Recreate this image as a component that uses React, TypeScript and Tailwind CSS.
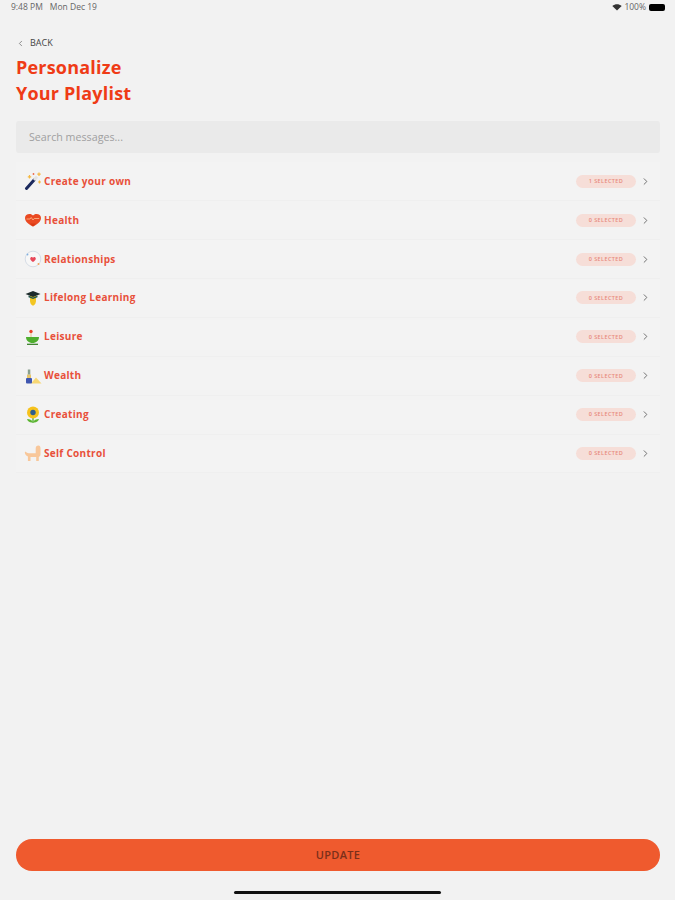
import { ChevronLeft, ChevronRight } from 'lucide-react';
import type { ReactNode } from 'react';

const Wand = () => (
  <svg viewBox="0 0 18 18" className="w-[18px] h-[18px]">
    <path d="M2.500 16.500 L10.500 7.500" stroke="#1c2a5e" strokeWidth="3" strokeLinecap="round" />
    <path d="M10 8 L13 4.700" stroke="#e4e4e4" strokeWidth="3" />
    <path d="M5.500 3v3.500M3.800 4.800h3.400M15 .5v3.500M13.300 2.200h3.400M15.500 8.500v3M14 10h3" stroke="#f5b942" strokeWidth="1.200" />
    <circle cx="9.500" cy="2" r="0.900" fill="#ef6a4a" />
  </svg>
);

const Heart = () => (
  <svg viewBox="0 0 18 18" className="w-[18px] h-[18px]">
    <path d="M9 15.500C4.500 13.500 1 10.500 1 7 1 4.500 3 3 5.500 3 7 3 8.300 3.600 9 4.600 9.700 3.600 11 3 12.500 3 15 3 17 4.500 17 7 17 10.500 13.500 13.500 9 15.500Z" fill="#ea4a22" />
    <path d="M2.500 8h3.500l1.200-1.500 1.800 2.500 1.200-1.500h5" stroke="#f9a678" strokeWidth="1" fill="none" />
    <path d="M6 12.500h6L9 15.500Z" fill="#d93a14" />
  </svg>
);

const Ring = () => (
  <svg viewBox="0 0 18 18" className="w-[18px] h-[18px]">
    <circle cx="9" cy="9" r="7.800" fill="#f7f7f7" stroke="#d6dde6" strokeWidth="1" />
    <path d="M9 12C7.300 10.900 6.200 9.900 6.200 8.500 6.200 7.500 7 6.900 7.700 6.900 8.200 6.900 8.700 7.200 9 7.700 9.300 7.200 9.800 6.900 10.300 6.900 11 6.900 11.800 7.500 11.800 8.500 11.800 9.900 10.700 10.900 9 12Z" fill="#e8485a" />
    <circle cx="14.500" cy="14" r="1" fill="#f5a35a" />
    <circle cx="3.500" cy="4.500" r="0.900" fill="#7fb0e0" />
  </svg>
);

const Grad = () => (
  <svg viewBox="0 0 18 18" className="w-[18px] h-[18px]">
    <path d="M6 6h6v5.500c0 2.500-1.300 5-3 5s-3-2.500-3-5Z" fill="#f3c623" />
    <path d="M1.500 5 9 2l7.500 3L9 8Z" fill="#1d2b2a" />
    <path d="M4.500 6.500l4.500 2 4.500-2v1.800L9 10 4.500 8.300Z" fill="#24594c" />
  </svg>
);

const Bowl = () => (
  <svg viewBox="0 0 18 18" className="w-[18px] h-[18px]">
    <circle cx="7" cy="3.500" r="1.700" fill="#e8432a" />
    <path d="M7 5v4" stroke="#e6c48a" strokeWidth="1" />
    <path d="M2 9h13c0 3.500-2.800 6-6.500 6S2 12.500 2 9Z" fill="#4fae2e" />
    <path d="M3 16.300h11" stroke="#2f7a1e" strokeWidth="1.200" />
  </svg>
);

const Coins = () => (
  <svg viewBox="0 0 18 18" className="w-[18px] h-[18px]">
    <path d="M7 16.500 12 10.500l5.500 6Z" fill="#f7d774" />
    <rect x="2" y="11" width="6" height="5.500" rx="1" fill="#3f56b0" />
    <rect x="3" y="7.500" width="4" height="3.500" fill="#e8c66a" />
    <rect x="3.800" y="2.500" width="2.500" height="5" fill="#8aa08f" />
  </svg>
);

const Flower = () => (
  <svg viewBox="0 0 18 18" className="w-[18px] h-[18px]">
    <path d="M9 12v5" stroke="#4fae2e" strokeWidth="1.300" />
    <path d="M3 13c2.800 0 5 1 6 3.300-3.200.4-5.300-.8-6-3.300ZM15 13c-2.800 0-5 1-6 3.300 3.200.4 5.300-.8 6-3.300Z" fill="#5cb531" />
    <circle cx="9" cy="6.500" r="6" fill="#f6c21c" />
    <circle cx="9" cy="6.500" r="2.700" fill="#2f5e8c" />
  </svg>
);

const Dog = () => (
  <svg viewBox="0 0 18 18" className="w-[18px] h-[18px]">
    <path d="M1.500 7.500c1 1.300 2 1.700 3.200 1.700h7V4.500c0-2 1-3 2.600-3s2.200 1 2.200 3v6c0 1.200-.7 2-1.700 2.400V17h-2.600V13H6.500V17H3.900V12.500C2 11.800.8 10 .8 8.300Z" fill="#f8c79a" />
  </svg>
);

interface IRow {
  title: string;
  count: number;
  icon: ReactNode;
}

const rows: IRow[] = [
  { title: 'Create your own', count: 1, icon: <Wand /> },
  { title: 'Health', count: 0, icon: <Heart /> },
  { title: 'Relationships', count: 0, icon: <Ring /> },
  { title: 'Lifelong Learning', count: 0, icon: <Grad /> },
  { title: 'Leisure', count: 0, icon: <Bowl /> },
  { title: 'Wealth', count: 0, icon: <Coins /> },
  { title: 'Creating', count: 0, icon: <Flower /> },
  { title: 'Self Control', count: 0, icon: <Dog /> },
];

const App = () => {
  return (
    <div className="w-[675px] h-[900px] bg-[#f2f2f2] flex flex-col font-['Open_Sans',sans-serif] overflow-hidden">
      <div className="h-[14px] pl-[11px] pr-[10px] flex items-center justify-between text-[8.500px] text-[#666]">
        <div className="flex gap-[7px]">
          <span>9:48 PM</span>
          <span>Mon Dec 19</span>
        </div>
        <div className="flex items-center gap-[2px]">
          <svg viewBox="0 0 12 9" className="w-[10px] h-[7px]">
            <path d="M6 8.500 0 2.500C3.500-.5 8.500-.5 12 2.500Z" fill="#333" />
          </svg>
          <span>100%</span>
          <div className="w-[16px] h-[7px] rounded-[2px] bg-black ml-[1px]" />
        </div>
      </div>

      <div className="mt-[22px] pl-[16px] flex items-center gap-[5px] h-[14px] text-[9px] text-[#444]">
        <ChevronLeft size={9} strokeWidth={1.5} />
        <span>BACK</span>
      </div>

      <h1 className="mt-[4px] pl-[16px] text-[18px] leading-[26px] font-bold tracking-[0.2px] text-[#ef3b16]">
        Personalize
        <br />
        Your Playlist
      </h1>

      <div className="mt-[15px] mx-[16px] w-[644px] h-[32px] rounded-[3px] bg-[#eaeaea] flex items-center pl-[13px] text-[10.700px] text-[#a0a0a0]">
        Search messages...
      </div>

      <div className="mt-[9.300px] mx-[16px] w-[644px] flex flex-col">
        {rows.map((row) => (
          <div
            key={row.title}
            className="h-[38.900px] flex items-center pl-[8px] pr-[9px] bg-[#f3f3f3] border-b border-[#efefef]"
          >
            <div className="w-[18px] h-[18px]">{row.icon}</div>
            <span className="ml-[2px] text-[10px] font-bold tracking-[0.3px] text-[#e8503a]">
              {row.title}
            </span>
            <div className="ml-auto w-[60px] h-[13px] rounded-full bg-[#f6ded8] flex items-center justify-center text-[5.500px] font-semibold tracking-[0.4px] text-[#e88a7c]">
              {row.count} SELECTED
            </div>
            <ChevronRight size={11} strokeWidth={2} className="ml-[4px] text-[#666]" />
          </div>
        ))}
      </div>

      <div className="flex-1" />

      <button className="mx-[16px] w-[644px] h-[32px] rounded-full bg-[#ef5a2e] text-[11px] tracking-[0.3px] text-[#7a2f1a] font-semibold">
        UPDATE
      </button>

      <div className="mt-[20px] mb-[6px] mx-auto w-[207px] h-[3px] rounded-full bg-[#111]" />
    </div>
  );
};

export default App;
